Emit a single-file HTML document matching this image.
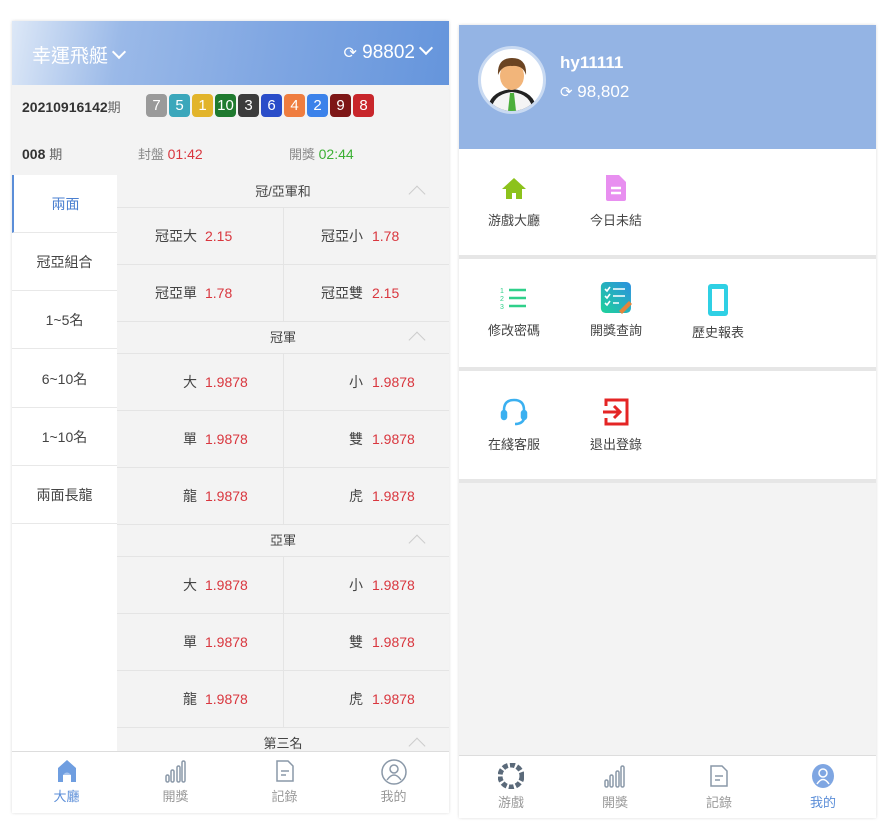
<!DOCTYPE html>
<html><head><meta charset="utf-8"><style>
*{margin:0;padding:0;box-sizing:border-box}
body{width:883px;height:840px;background:#fff;font-family:"Liberation Sans","Noto Sans CJK TC",sans-serif;position:relative;overflow:hidden;color:#333}
.a{position:absolute}
.L{left:12px;top:21px;width:437px;height:792px;background:#f3f3f3;box-shadow:0 0 3px rgba(0,0,0,.15);overflow:hidden}
.hdr{left:0;top:0;width:437px;height:64px;background:linear-gradient(100deg,#dde8f7 0%,#9ab9e8 25%,#7fa6e2 60%,#6595dc 100%);color:#fff}
.ball{display:inline-block;width:21px;height:23px;border-radius:4px;color:#fff;font-size:15px;text-align:center;line-height:23px;margin-right:2px}
.side{left:0;top:154px;width:105px;height:600px;background:#fff}
.si{position:absolute;left:0;width:105px;height:58px;line-height:58px;text-align:center;font-size:14px;color:#444;border-bottom:1px solid #e8e8e8}
.sh{position:absolute;left:105px;width:332px;height:32px;line-height:32px;text-align:center;font-size:13px;color:#444;border-bottom:1px solid #e4e4e4}
.car{position:absolute;right:26px;top:12px;width:12px;height:12px;border-left:1.5px solid #ccc;border-top:1.5px solid #ccc;transform:rotate(45deg)}
.row{position:absolute;left:105px;width:332px;height:57px;border-bottom:1px solid #e4e4e4}
.c{position:absolute;top:0;width:166px;height:56px;line-height:56px;font-size:14px;color:#444}
.c s{text-decoration:none;position:absolute;right:86px;top:0}
.c b{font-weight:normal;color:#d9363e;position:absolute;left:88px;top:0}
.c2{left:166px;border-left:1px solid #e4e4e4}
.tab{left:0;top:730px;width:437px;height:62px;background:#fff;border-top:1px solid #ddd}
.ti{position:absolute;top:6px;width:109px;text-align:center;font-size:13px;color:#999}
.R{left:459px;top:25px;width:417px;height:793px;background:#f3f3f3;box-shadow:0 0 3px rgba(0,0,0,.15);overflow:hidden}
.sec{position:absolute;left:0;width:417px;background:#fff;border-bottom:4px solid #e6e6e6}
.mi{position:absolute;width:100px;text-align:center;font-size:13px;color:#444}
</style></head><body>
<div class="a L">
 <div class="a hdr">
  <div class="a" style="left:20px;top:20px;font-size:19px">幸運飛艇<span style="display:inline-block;width:10px;height:10px;border-right:2px solid #fff;border-bottom:2px solid #fff;transform:rotate(45deg);margin-left:6px;position:relative;top:-5px"></span></div>
  <div class="a" style="right:18px;top:21px;font-size:19px"><span style="font-size:16px">⟳</span> 98802<span style="display:inline-block;width:10px;height:10px;border-right:2px solid #fff;border-bottom:2px solid #fff;transform:rotate(45deg);margin-left:6px;position:relative;top:-5px"></span></div>
 </div>
 <div class="a" style="left:10px;top:76px;font-size:14px;font-weight:bold;color:#333">20210916142<span style="font-weight:normal;color:#666;font-size:13px">期</span></div>
 <div class="a" style="left:134px;top:73px;white-space:nowrap">
  <span class="ball" style="background:#9a9a9a">7</span><span class="ball" style="background:#3ba7bb">5</span><span class="ball" style="background:#e2b42b">1</span><span class="ball" style="background:#1f7a2f">10</span><span class="ball" style="background:#3c3c3c">3</span><span class="ball" style="background:#2a4dc9">6</span><span class="ball" style="background:#ef7d3f">4</span><span class="ball" style="background:#3b82ea">2</span><span class="ball" style="background:#7d1616">9</span><span class="ball" style="background:#c8262b">8</span>
 </div>
 <div class="a" style="left:10px;top:123px;font-size:14px;font-weight:bold">008 <span style="font-weight:normal;color:#666;font-size:13px">期</span></div>
 <div class="a" style="left:126px;top:123px;font-size:13px;color:#888">封盤 <span style="color:#d9363e;font-size:14px">01:42</span></div>
 <div class="a" style="left:277px;top:123px;font-size:13px;color:#888">開獎 <span style="color:#3cb034;font-size:14px">02:44</span></div>
 <div class="a side">
  <div class="si" style="top:0;color:#4a7fd0;border-left:2px solid #5b8ed8">兩面</div>
  <div class="si" style="top:58px">冠亞組合</div>
  <div class="si" style="top:116px">1~5名</div>
  <div class="si" style="top:175px">6~10名</div>
  <div class="si" style="top:233px">1~10名</div>
  <div class="si" style="top:291px">兩面長龍</div>
 </div>
 <div class="sh" style="top:155px">冠/亞軍和<i class="car"></i></div>
 <div class="row" style="top:187px"><div class="c"><s>冠亞大</s><b>2.15</b></div><div class="c c2"><s>冠亞小</s><b>1.78</b></div></div>
 <div class="row" style="top:244px"><div class="c"><s>冠亞單</s><b>1.78</b></div><div class="c c2"><s>冠亞雙</s><b>2.15</b></div></div>
 <div class="sh" style="top:301px">冠軍<i class="car"></i></div>
 <div class="row" style="top:333px"><div class="c"><s>大</s><b>1.9878</b></div><div class="c c2"><s>小</s><b>1.9878</b></div></div>
 <div class="row" style="top:390px"><div class="c"><s>單</s><b>1.9878</b></div><div class="c c2"><s>雙</s><b>1.9878</b></div></div>
 <div class="row" style="top:447px"><div class="c"><s>龍</s><b>1.9878</b></div><div class="c c2"><s>虎</s><b>1.9878</b></div></div>
 <div class="sh" style="top:504px">亞軍<i class="car"></i></div>
 <div class="row" style="top:536px"><div class="c"><s>大</s><b>1.9878</b></div><div class="c c2"><s>小</s><b>1.9878</b></div></div>
 <div class="row" style="top:593px"><div class="c"><s>單</s><b>1.9878</b></div><div class="c c2"><s>雙</s><b>1.9878</b></div></div>
 <div class="row" style="top:650px"><div class="c"><s>龍</s><b>1.9878</b></div><div class="c c2"><s>虎</s><b>1.9878</b></div></div>
 <div class="sh" style="top:707px">第三名<i class="car"></i></div>
 <div class="a tab">
  <div class="ti" style="left:0;color:#5b8ed8"><svg width="26" height="26" viewBox="0 0 26 26"><path d="M13 2 L22 10 L22 24 L17 24 L17 17 L9 17 L9 24 L4 24 L4 10 Z" fill="#6f9ee0"/><path d="M9 17 Q13 12 17 17" fill="#a9c6ef"/></svg><div style="margin-top:-1px">大廳</div></div>
  <div class="ti" style="left:109px"><svg width="26" height="26" viewBox="0 0 26 26" fill="none" stroke="#8a98a8" stroke-width="1.5"><rect x="3" y="17" width="3" height="7" rx="1.5"/><rect x="8" y="12" width="3" height="12" rx="1.5"/><rect x="14" y="8" width="3" height="16" rx="1.5"/><rect x="19" y="3" width="3" height="21" rx="1.5"/></svg><div style="margin-top:-1px">開獎</div></div>
  <div class="ti" style="left:218px"><svg width="26" height="26" viewBox="0 0 26 26" fill="none" stroke="#8a98a8" stroke-width="1.5"><path d="M5 3 H16 L21 8 V23 H5 Z"/><path d="M9 13 H17 M9 17 H14"/></svg><div style="margin-top:-1px">記錄</div></div>
  <div class="ti" style="left:327px"><svg width="28" height="28" viewBox="0 0 28 28" fill="none" stroke="#8a98a8" stroke-width="1.5"><circle cx="14" cy="14" r="12"/><circle cx="14" cy="11" r="4"/><path d="M7 22 Q14 12 21 22"/></svg><div style="margin-top:-3px">我的</div></div>
 </div>
</div>

<div class="a R">
 <div class="a" style="left:0;top:0;width:417px;height:124px;background:#94b4e4"></div>
 <div class="a" style="left:19px;top:21px;width:68px;height:68px;border-radius:50%;background:#fff;border:3px solid #c9daf2;overflow:hidden">
  <svg width="62" height="62" viewBox="0 0 62 62"><path d="M6 62 Q8 42 31 40 Q54 42 56 62Z" fill="#222"/><path d="M10 62 Q12 45 31 43 Q50 45 52 62Z" fill="#f4f4f4"/><path d="M29 44 L33 44 L35 62 L27 62Z" fill="#4caf3c"/><ellipse cx="31" cy="27" rx="12" ry="14" fill="#f2b57a"/><path d="M17 26 Q16 9 31 9 Q46 9 45 26 Q42 16 31 17 Q21 16 17 26Z" fill="#6b4422"/></svg>
 </div>
 <div class="a" style="left:101px;top:28px;color:#fff;font-size:17px;font-weight:bold">hy11111</div>
 <div class="a" style="left:101px;top:57px;color:#fff;font-size:17px"><span style="font-size:15px">⟳</span> 98,802</div>
 <div class="sec" style="top:124px;height:110px">
  <div class="mi" style="left:5px;top:26px"><svg width="26" height="26" viewBox="0 0 26 26"><path d="M13 3 L25 14 L21 14 L21 24 L15 24 L15 18 L11 18 L11 24 L5 24 L5 14 L1 14Z" fill="#8cc21c"/></svg><div style="margin-top:6px">游戲大廳</div></div>
  <div class="mi" style="left:107px;top:24px"><svg width="26" height="30" viewBox="0 0 26 30"><path d="M3 2 H16 L23 9 V26 Q23 28 21 28 H5 Q3 28 3 26Z" fill="#e88ff0"/><path d="M8 15 H18 M8 20 H18" stroke="#fff" stroke-width="2.5"/></svg><div style="margin-top:4px">今日未結</div></div>
 </div>
 <div class="sec" style="top:234px;height:112px">
  <div class="mi" style="left:5px;top:24px"><svg width="30" height="30" viewBox="0 0 30 30" stroke="#2fd08a" stroke-width="2.5"><path d="M10 7 H27 M10 15 H27 M10 23 H27"/><text x="1" y="10" font-size="7" fill="#2fd08a" stroke="none">1</text><text x="1" y="18" font-size="7" fill="#2fd08a" stroke="none">2</text><text x="1" y="26" font-size="7" fill="#2fd08a" stroke="none">3</text></svg><div style="margin-top:4px">修改密碼</div></div>
  <div class="mi" style="left:107px;top:22px"><svg width="34" height="34" viewBox="0 0 34 34"><defs><linearGradient id="g" x1="0" y1="1" x2="1" y2="0"><stop offset="0" stop-color="#1fd39a"/><stop offset="1" stop-color="#2c8fe0"/></linearGradient></defs><rect x="2" y="1" width="32" height="33" rx="5" fill="url(#g)" transform="scale(.94)"/><path d="M6 8 l2 2 l3 -4 M6 15 l2 2 l3 -4 M6 22 l2 2 l3 -4 M14 8 H26 M14 15 H26 M14 22 H20" stroke="#fff" stroke-width="1.6" fill="none"/><path d="M20 30 L30 20 L33 23 L23 33Z" fill="#e4843a"/></svg><div style="margin-top:2px">開獎查詢</div></div>
  <div class="mi" style="left:209px;top:24px"><svg width="22" height="34" viewBox="0 0 22 34"><rect x="1" y="1" width="20" height="32" rx="3" fill="#2fd0e4"/><rect x="5" y="6" width="12" height="22" fill="#fff"/></svg><div style="margin-top:2px">歷史報表</div></div>
 </div>
 <div class="sec" style="top:346px;height:112px">
  <div class="mi" style="left:5px;top:26px"><svg width="28" height="30" viewBox="0 0 28 30" fill="none" stroke="#3bb0f0" stroke-width="2.5"><path d="M4 18 V13 Q4 3 14 3 Q24 3 24 13 V18"/><rect x="2" y="14" width="4" height="8" rx="2" fill="#3bb0f0"/><rect x="22" y="14" width="4" height="8" rx="2" fill="#3bb0f0"/><path d="M24 22 Q22 27 15 27"/></svg><div style="margin-top:4px">在綫客服</div></div>
  <div class="mi" style="left:107px;top:26px"><svg width="28" height="30" viewBox="0 0 28 30" fill="none" stroke="#e42525" stroke-width="3"><path d="M4 9 V3 H25 V27 H4 V21"/><path d="M1 15 H17 M12 9 L18 15 L12 21"/></svg><div style="margin-top:4px">退出登錄</div></div>
 </div>
 <div class="a" style="left:0;top:730px;width:417px;height:63px;background:#fff;border-top:1px solid #ddd">
  <div class="ti" style="left:0;top:7px;width:104px"><svg width="26" height="26" viewBox="0 0 26 26"><circle cx="13" cy="13" r="11" fill="none" stroke="#5b6a7a" stroke-width="5" stroke-dasharray="5 2.2"/><circle cx="13" cy="13" r="6" fill="#fff"/></svg><div>游戲</div></div>
  <div class="ti" style="left:104px;top:7px;width:104px"><svg width="26" height="26" viewBox="0 0 26 26" fill="none" stroke="#8a98a8" stroke-width="1.5"><rect x="3" y="17" width="3" height="7" rx="1.5"/><rect x="8" y="12" width="3" height="12" rx="1.5"/><rect x="14" y="8" width="3" height="16" rx="1.5"/><rect x="19" y="3" width="3" height="21" rx="1.5"/></svg><div>開獎</div></div>
  <div class="ti" style="left:208px;top:7px;width:104px"><svg width="26" height="26" viewBox="0 0 26 26" fill="none" stroke="#8a98a8" stroke-width="1.5"><path d="M5 3 H16 L21 8 V23 H5 Z"/><path d="M9 13 H17 M9 17 H14"/></svg><div>記錄</div></div>
  <div class="ti" style="left:312px;top:7px;width:104px;color:#5b8ed8"><svg width="26" height="26" viewBox="0 0 26 26"><ellipse cx="13" cy="13" rx="11" ry="12" fill="#7fa6e2"/><circle cx="13" cy="10" r="4" fill="none" stroke="#fff" stroke-width="1.5"/><path d="M7 21 Q13 12 19 21" fill="none" stroke="#fff" stroke-width="1.5"/></svg><div>我的</div></div>
 </div>
</div>
</body></html>
